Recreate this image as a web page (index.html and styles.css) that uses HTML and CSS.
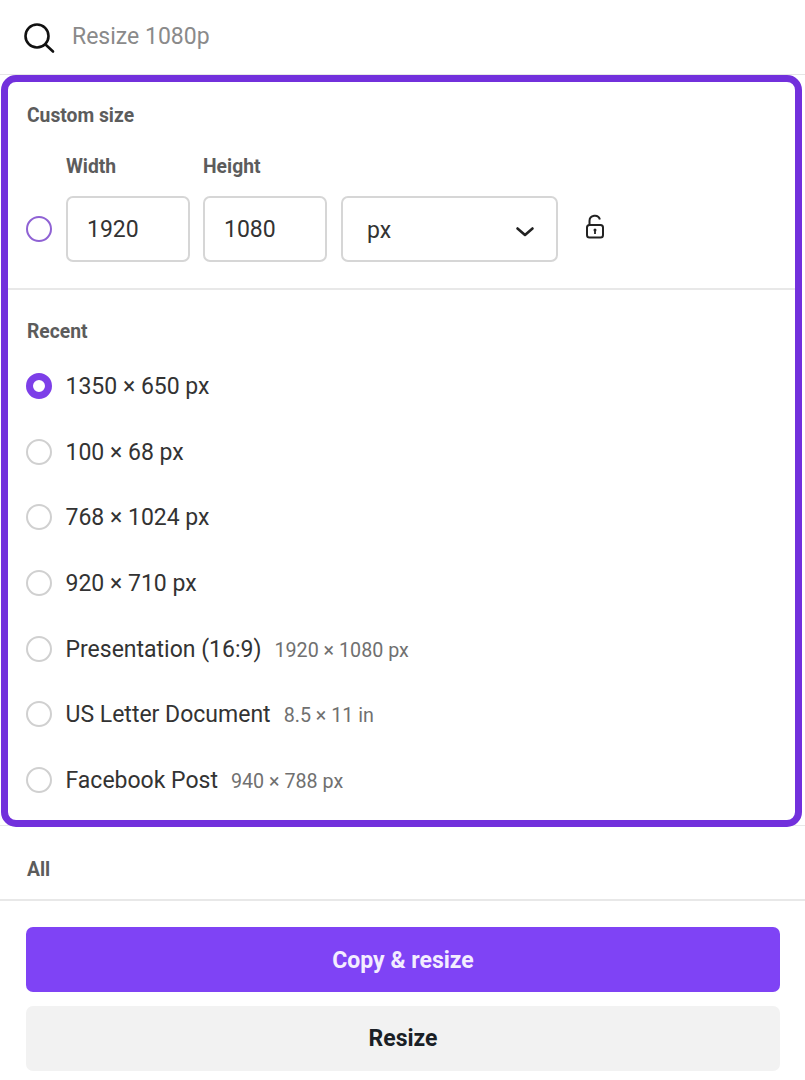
FILE: index.html
```html
<!DOCTYPE html>
<html lang="en">
<head>
<meta charset="utf-8">
<title>Resize</title>
<link rel="stylesheet" href="styles.css">
</head>
<body>
<div class="search">
  <svg class="search-icon" width="32" height="32" viewBox="0 0 32 32" fill="none" stroke="#111" stroke-width="2.6" stroke-linecap="round"><circle cx="14" cy="14" r="11.5"/><path d="M22.5 22.5l7.5 7"/></svg>
  <span class="search-text">Resize 1080p</span>
</div>
<section class="highlight">
  <div class="custom">
    <div class="heading">Custom size</div>
    <div class="labels"><span class="label">Width</span><span class="label">Height</span></div>
    <div class="fields">
      <span class="radio radio-custom"></span>
      <div class="field">1920</div>
      <div class="field">1080</div>
      <div class="field select"><span>px</span>
        <svg width="20" height="12" viewBox="0 0 20 12" fill="none" stroke="#222" stroke-width="2.6" stroke-linecap="round" stroke-linejoin="round"><path d="M2.5 2.5l7.5 6.5 7.5-6.5"/></svg>
      </div>
      <svg class="lock" width="20" height="26" viewBox="0 0 20 26" fill="none" stroke="#222" stroke-width="2"><path d="M4.5 11V7a5.3 5.3 0 0 1 10.4-1.4"/><rect x="2" y="11" width="16" height="12.5" rx="2.5"/><path d="M10 16v4" stroke-width="1.8"/><circle cx="10" cy="16" r="1.5" fill="#222" stroke="none"/></svg>
    </div>
  </div>
  <div class="recent">
    <div class="heading">Recent</div>
    <ul class="list">
      <li class="row"><span class="radio radio-on"></span><span class="name">1350 × 650 px</span></li>
      <li class="row"><span class="radio"></span><span class="name">100 × 68 px</span></li>
      <li class="row"><span class="radio"></span><span class="name">768 × 1024 px</span></li>
      <li class="row"><span class="radio"></span><span class="name">920 × 710 px</span></li>
      <li class="row"><span class="radio"></span><span class="name">Presentation (16:9)</span><span class="size">1920 × 1080 px</span></li>
      <li class="row"><span class="radio"></span><span class="name">US Letter Document</span><span class="size">8.5 × 11 in</span></li>
      <li class="row"><span class="radio"></span><span class="name">Facebook Post</span><span class="size">940 × 788 px</span></li>
    </ul>
  </div>
</section>
<div class="all"><span class="heading">All</span></div>
<div class="actions">
  <button class="btn btn-primary">Copy &amp; resize</button>
  <button class="btn btn-secondary">Resize</button>
</div>
</body>
</html>
```
FILE: styles.css
```css
* { box-sizing: border-box; }
html, body { margin: 0; padding: 0; background: #fff; }
body { font-family: Roboto, "Liberation Sans", sans-serif; color: #2b2b2b; width: 805px; height: 1080px; overflow: hidden; }

.search { height: 75px; display: flex; align-items: center; padding-left: 23px; gap: 17px; border-bottom: 1px solid #e6e6e6; }
.search-icon { flex: none; margin-top: 1px; }
.search-text { font-size: 23px; color: #8a8a8a; margin-top: -2px; }

.highlight { position: relative; z-index: 1; margin: 0 3px 0 1px; height: 752px; border: 7px solid #7230dc; border-radius: 15px; background: #fff; }
.heading { font-size: 19.3px; font-weight: 700; color: #5c5c5c; line-height: 22px; padding-left: 1px; }

.custom { height: 208px; padding: 23px 18px 0; border-bottom: 2px solid #e8e8e8; }
.labels { display: flex; margin-top: 29px; padding-left: 40px; }
.label { width: 137px; font-size: 19.3px; font-weight: 700; color: #5c5c5c; line-height: 22px; }
.fields { display: flex; align-items: center; margin-top: 18px; }
.field { width: 124px; height: 66px; margin-right: 13px; padding-left: 19px; display: flex; align-items: center; border: 2px solid #d6d6d6; border-radius: 7px; font-size: 23px; color: #333; }
.select { width: 216.5px; margin-left: 1px; margin-right: 0; padding: 2px 21px 0 24px; justify-content: space-between; }
.select svg { margin-top: 3px; }
.lock { margin-left: 27px; margin-top: -4px; flex: none; }

.radio { flex: none; width: 26px; height: 26px; margin-right: 13.5px; border-radius: 50%; border: 2px solid #d0d0d0; }
.radio-custom { border-color: #8f62d4; margin-right: 14px; }
.radio-on { border: 7px solid #7d3fe8; background: #fff; }

.recent { padding: 31px 18px 0; }
.list { list-style: none; margin: 10px 0 0; padding: 0; }
.row { height: 65.7px; display: flex; align-items: center; }
.name { font-size: 23px; color: #333; margin-top: 1px; }
.size { margin-left: 13px; font-size: 19.7px; color: #707070; margin-top: 3px; }

.all { height: 76px; margin-top: -2px; padding: 33px 26px 0; border-top: 1px solid #e8e8e8; border-bottom: 2px solid #e8e8e8; }
.all .heading { display: block; }

.actions { display: flex; flex-direction: column; gap: 14px; padding: 26px 25px 0 26px; }
.btn { height: 65px; border: 0; border-radius: 7px; font-family: inherit; font-size: 23px; font-weight: 700; padding-top: 1px; }
.btn-primary { background: #7f43f5; color: #f3edff; padding-top: 2px; }
.btn-secondary { background: #f2f2f2; color: #1a1f26; }
```
